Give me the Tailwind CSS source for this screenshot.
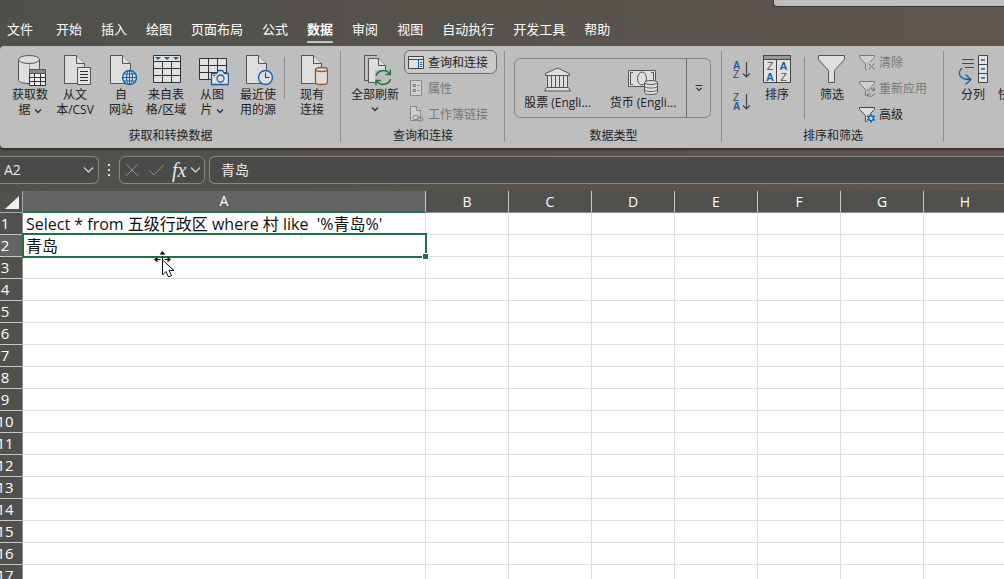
<!DOCTYPE html>
<html lang="zh-CN">
<head>
    <meta charset="UTF-8">
    <meta name="viewport" content="width=device-width, initial-scale=1.0">
    <title>工作簿 - 数据</title>
    <script src="https://cdn.jsdelivr.net/npm/@tailwindcss/browser@4"></script>
</head>
<body class="relative h-screen overflow-hidden flex flex-col bg-linear-to-r from-[#50504b] to-[#5e554e] font-['Open_Sans','Noto_Sans_CJK_SC',sans-serif] text-xs text-[#222]">

    <!-- Floating panel at the top edge -->
    <div class="absolute top-0 right-0 left-[773px] h-[7px] bg-[#bebebe] border-b border-l border-[#3a3733] rounded-bl-sm"></div>

    <!-- Ribbon tabs -->
    <nav class="shrink-0 h-[46px] pt-[19px] pl-[7px] flex items-start gap-[19px] text-[13px] leading-5 text-white whitespace-nowrap">
        <a href="#" class="mr-1">文件</a>
        <a href="#">开始</a>
        <a href="#">插入</a>
        <a href="#">绘图</a>
        <a href="#">页面布局</a>
        <a href="#">公式</a>
        <a href="#" class="font-bold h-6 border-b-2 border-[#b4c8bf]">数据</a>
        <a href="#">审阅</a>
        <a href="#">视图</a>
        <a href="#">自动执行</a>
        <a href="#">开发工具</a>
        <a href="#">帮助</a>
    </nav>

    <!-- Ribbon -->
    <div class="shrink-0 h-[102px] flex overflow-hidden rounded-l-sm bg-[#bebebe] shadow-[0_2px_2px_#35312e] leading-[15px] whitespace-nowrap">

        <section class="shrink-0 w-[341px] flex flex-col relative">
            <div class="flex pl-2 pt-2">
                <button class="w-11 flex flex-col items-center">
                    <svg width="32" height="32" fill="#dedede" stroke="#555">
                        <path d="M4.500 5v21c0 2 4.500 3.500 10.500 3.500h1V5z"/>
                        <path d="M25.500 5v10"/>
                        <path d="M16 5h9v10h-9z" stroke="none"/>
                        <ellipse cx="15" cy="5.500" rx="10.500" ry="4"/>
                        <path d="M15.500 15.500h16v16h-16z" fill="#eee" stroke="#333"/>
                        <path d="M15.500 15.500h16v4h-16z" fill="#888" stroke="#555"/>
                        <path d="M20.500 20v11M26.500 20v11M16 23.500h15M16 27.500h15" stroke="#333"/>
                    </svg>
                    <span class="mt-px">获取数<br>据 <svg class="inline" width="8" height="6" fill="none" stroke="#333" stroke-width="1.400"><path d="M1 1.500l3 3 3-3"/></svg></span>
                </button>
                <button class="w-[46px] flex flex-col items-center">
                    <svg width="32" height="32" fill="#dedede" stroke="#555">
                        <path d="M5.500 1.500h12l8 8v20h-20z"/><path d="M17.500 1.500v8h8"/>
                        <path d="M18.500 13.500h13v17h-13z" fill="#e4e4e4"/>
                        <path d="M21 17.500h8M21 20.500h8M21 23.500h8M21 26.500h8" stroke="#333"/>
                    </svg>
                    <span class="mt-px">从文<br>本/CSV</span>
                </button>
                <button class="w-[46px] flex flex-col items-center">
                    <svg width="32" height="32" fill="#dedede" stroke="#555">
                        <path d="M5.500 1.500h12l8 8v20h-20z"/><path d="M17.500 1.500v8h8"/>
                        <g stroke="#1260a8"><circle cx="24.500" cy="23.500" r="7" stroke-width="1.400"/><ellipse cx="24.500" cy="23.500" rx="3" ry="7"/><path d="M17.500 23.500h14M18.500 20h12M18.500 27h12M24.500 16.500v14" fill="none"/></g>
                    </svg>
                    <span class="mt-px">自<br>网站</span>
                </button>
                <button class="w-11 flex flex-col items-center">
                    <svg width="32" height="32" fill="#e2e2e2" stroke="#333">
                        <path d="M3.500 1.500h27v27h-27z"/>
                        <path d="M3.500 7.500h27M3.500 14.500h27M3.500 21.500h27M12.500 7v21M21.500 7v21"/>
                        <path d="M5 3h6l-3 3zM14 3h6l-3 3zM23 3h6l-3 3z" fill="#1260a8" stroke="none"/>
                    </svg>
                    <span class="mt-px">来自表<br>格/区域</span>
                </button>
                <button class="w-12 flex flex-col items-center">
                    <svg width="34" height="32" viewBox="-1 0 34 32" fill="#e2e2e2" stroke="#333">
                        <path d="M3.500 4.500h27v21h-27z"/><path d="M3.500 11.500h27M3.500 18.500h27M12.500 4v21M21.500 4v21"/>
                        <path d="M15.500 19.500h5l2-3h4l2 3h4v11h-17z" stroke="#1260a8" stroke-width="1.300"/>
                        <circle cx="24.500" cy="24.500" r="3.500" stroke="#1260a8" stroke-width="1.300"/><path d="M17 21.500h2" stroke="#1260a8"/>
                    </svg>
                    <span class="mt-px">从图<br>片 <svg class="inline" width="8" height="6" fill="none" stroke="#333" stroke-width="1.400"><path d="M1 1.500l3 3 3-3"/></svg></span>
                </button>
                <button class="w-11 flex flex-col items-center">
                    <svg width="32" height="32" fill="#dedede" stroke="#555">
                        <path d="M4.500 1.500h12l8 8v20h-20z"/><path d="M16.500 1.500v8h8"/>
                        <circle cx="23.500" cy="23.500" r="7" stroke="#1260a8" stroke-width="1.400"/><path d="M23.500 18.500v5h4" fill="none" stroke="#333"/>
                    </svg>
                    <span class="mt-px">最近使<br>用的源</span>
                </button>
                <div class="w-px h-[42px] mt-[3px] ml-1 mr-[5px] bg-[#8c8c8c]"></div>
                <button class="w-11 flex flex-col items-center">
                    <svg width="32" height="32" fill="#dedede" stroke="#555">
                        <path d="M5.500 1.500h12l8 8v20h-20z"/><path d="M17.500 1.500v8h8"/>
                        <g stroke="#a1561f" stroke-width="1.300"><path d="M19.500 15.500v13c0 1.300 2.500 2 6 2s6-.7 6-2v-13"/><ellipse cx="25.500" cy="15.500" rx="6" ry="2"/></g>
                    </svg>
                    <span class="mt-px">现有<br>连接</span>
                </button>
            </div>
            <h2 class="absolute bottom-[5px] inset-x-0 text-center">获取和转换数据</h2>
            <div class="absolute right-0 top-[5px] w-px h-[91px] bg-[#8c8c8c]"></div>
        </section>

        <section class="shrink-0 w-[164px] flex flex-col relative">
            <div class="flex pl-2">
                <button class="w-[52px] pt-2 flex flex-col items-center self-start">
                    <svg width="32" height="32" fill="#dedede" stroke="#555">
                        <path d="M18 1.500H5.500v25H9" fill="none"/>
                        <path d="M9.500 4.500h10l7 7v17h-17z"/><path d="M19.500 4.500v7h7"/>
                        <path d="M16 16h15v15H16z" fill="#bebebe" stroke="none"/>
                        <g fill="none" stroke="#23713f" stroke-width="1.500"><path d="M17 22a7.500 7 0 0 1 14-1.500M31.500 15.500v5h-5M31.500 25a7.500 7 0 0 1-14 1.500M17 31.500v-5h5"/></g>
                    </svg>
                    <span class="mt-px">全部刷新</span>
                    <svg class="mt-1" width="8" height="6" fill="none" stroke="#333" stroke-width="1.400"><path d="M1 1.500l3 3 3-3"/></svg>
                </button>
                <div class="ml-[3px] pt-1 flex flex-col gap-0.5 items-start">
                    <button class="h-6 w-[93px] pl-[3px] flex items-center gap-1 rounded-md border border-[#6c6c6c] bg-[#cacaca]">
                        <svg width="16" height="16" fill="#e2e2e2" stroke="#444"><path d="M.5 2.500h15v12H.5zM.5 5.500h15"/><path d="M10.500 6v8" stroke="#1260a8"/><path d="M12 8.500h2M12 10.500h2M12 12.500h2" stroke="#1260a8"/></svg>
                        查询和连接
                    </button>
                    <button class="h-6 pl-1 flex items-center gap-1 text-[#777]" disabled>
                        <svg width="16" height="16" fill="#d0d0d0" stroke="#888"><path d="M2.500.5h11v15h-11z"/><path d="M5 4.500h2.500v2H5zM5 9.500h2.500v2H5zM9.500 5.500h2M9.500 10.500h2" stroke="#777"/></svg>
                        属性
                    </button>
                    <button class="h-6 pl-1 flex items-center gap-1 text-[#777]" disabled>
                        <svg width="16" height="16" fill="#d0d0d0" stroke="#888"><path d="M2.500.5h6l4 4v10h-10z"/><path d="M8.500.5v4h4"/><rect x="5" y="9.500" width="6" height="4" rx="2"/><rect x="9" y="11" width="6" height="4" rx="2" fill="none"/></svg>
                        工作簿链接
                    </button>
                </div>
            </div>
            <h2 class="absolute bottom-[5px] inset-x-0 text-center">查询和连接</h2>
            <div class="absolute right-0 top-[5px] w-px h-[91px] bg-[#8c8c8c]"></div>
        </section>

        <section class="shrink-0 w-[217px] flex flex-col relative">
            <div class="mt-3 ml-[9px] w-[197px] h-[60px] flex rounded-md border border-[#858585]">
                <button class="w-[85px] pt-2 flex flex-col items-center">
                    <svg width="29" height="26" fill="#dedede" stroke="#555">
                        <path d="M2.500 6.500L14.500 1l12 5.500v2h-24z"/>
                        <path d="M4.500 8.500h20v12h-20z"/><path d="M8.500 8.500v12M12.500 8.500v12M16.500 8.500v12M20.500 8.500v12"/>
                        <path d="M3.500 20.500h22l2 3.500h-26z"/>
                    </svg>
                    <span class="mt-0.5">股票 (Engli...</span>
                </button>
                <button class="w-[86px] pt-2 flex flex-col items-center">
                    <svg width="30" height="28" fill="#dedede" stroke="#555">
                        <path d="M.5 3.500h27v16H.5z"/><ellipse cx="14" cy="11.500" rx="4.500" ry="6.500"/>
                        <path d="M5 5.500H2.500v12H5M23 5.500h2.500v8" fill="none"/>
                        <path d="M16.500 15.500v10c0 1.300 3 2 6.500 2s6.500-.7 6.500-2v-10"/><ellipse cx="23" cy="15.500" rx="6.500" ry="2"/>
                        <path d="M16.500 19c0 1.300 3 2 6.500 2s6.500-.7 6.500-2M16.500 22.500c0 1.300 3 2 6.500 2s6.500-.7 6.500-2" fill="none"/>
                    </svg>
                    <span>货币 (Engli...</span>
                </button>
                <button class="flex-1 flex items-center justify-center border-l border-[#6c6c6c]" aria-label="更多数据类型">
                    <svg width="8" height="8" fill="none" stroke="#333" stroke-width="1.200"><path d="M.5 1.500h7M1.500 4l2.500 2.500L6.500 4"/></svg>
                </button>
            </div>
            <h2 class="absolute bottom-[5px] inset-x-0 text-center">数据类型</h2>
            <div class="absolute right-0 top-[5px] w-px h-[91px] bg-[#8c8c8c]"></div>
        </section>

        <section class="shrink-0 w-[222px] flex flex-col relative">
            <div class="flex pl-2.5">
                <div class="pt-3.5 flex flex-col gap-3">
                    <button aria-label="升序">
                        <svg class="block" width="20" height="20" fill="none" stroke="#444">
                            <g stroke="none" font-size="10" font-family="Liberation Sans"><text x="1" y="9" fill="#1260a8" font-weight="bold">A</text><text x="1" y="18" fill="#444">Z</text></g>
                            <path d="M14.500 2v15M11 13.500l3.500 3.500 3.500-3.500" stroke-width="1.200"/>
                        </svg>
                    </button>
                    <button aria-label="降序">
                        <svg class="block" width="20" height="20" fill="none" stroke="#444">
                            <g stroke="none" font-size="10" font-family="Liberation Sans"><text x="1" y="9" fill="#444">Z</text><text x="1" y="18" fill="#1260a8" font-weight="bold">A</text></g>
                            <path d="M14.500 2v15M11 13.500l3.500 3.500 3.500-3.500" stroke-width="1.200"/>
                        </svg>
                    </button>
                </div>
                <button class="w-11 pt-2 ml-[3px] flex flex-col items-center self-start">
                    <svg width="32" height="32" fill="#e2e2e2" stroke="#444">
                        <path d="M2.500 1.500h27v27h-27z"/><path d="M2.500 1.500h27v4h-27z" fill="#999"/><path d="M15.500 6v22"/>
                        <g stroke="none" font-size="11" font-family="Liberation Sans" text-anchor="middle"><text x="9" y="16" fill="#555">Z</text><text x="9" y="27" fill="#1260a8" font-weight="bold">A</text><text x="22.500" y="16" fill="#1260a8" font-weight="bold">A</text><text x="22.500" y="27" fill="#555">Z</text></g>
                    </svg>
                    <span class="mt-px">排序</span>
                </button>
                <div class="w-px h-[62px] mt-[11px] ml-[5px] mr-[5px] bg-[#8c8c8c]"></div>
                <button class="w-11 pt-2 flex flex-col items-center self-start">
                    <svg width="32" height="32" fill="#dedede" stroke="#555"><path d="M2.500 1.500h26v4l-10 11v12h-6v-12l-10-11z"/></svg>
                    <span class="mt-px">筛选</span>
                </button>
                <div class="ml-[5px] pt-1 flex flex-col gap-0.5 items-start">
                    <button class="h-6 flex items-center gap-[3px] text-[#777]" disabled>
                        <svg width="17" height="17" fill="#d0d0d0" stroke="#777"><path d="M.5 1.500h15v2l-6 6v6h-3v-6l-6-6z"/><path d="M8 8h9v9H8z" fill="#bebebe" stroke="none"/><path d="M9.500 9.500l6 6M15.500 9.500l-6 6"/></svg>
                        清除
                    </button>
                    <button class="h-6 flex items-center gap-[3px] text-[#777]" disabled>
                        <svg width="17" height="17" fill="#d0d0d0" stroke="#777"><path d="M.5 1.500h15v2l-6 6v6h-3v-6l-6-6z"/><path d="M7.500 7.500H17V17H7.500z" fill="#bebebe" stroke="none"/><path d="M8.500 12a4 4 0 0 1 7-2M15.500 7.500v3h-3M15.500 13a4 4 0 0 1-7 2M8.500 17v-3h3" fill="none"/></svg>
                        重新应用
                    </button>
                    <button class="h-6 flex items-center gap-[3px]">
                        <svg width="17" height="17" fill="#dedede" stroke="#444"><path d="M.5 1.500h15v2l-6 6v6h-3v-6l-6-6z"/><path d="M8 8h9v9H8z" fill="#bebebe" stroke="none"/><g fill="none" stroke="#1260a8"><path d="M12 8v8.500M8.300 10l7.400 4.300M8.300 14.300l7.400-4.300" stroke-width="1.600"/><circle cx="12" cy="12.200" r="2.400" stroke-width="1.300" fill="#dedede"/></g></svg>
                        高级
                    </button>
                </div>
            </div>
            <h2 class="absolute bottom-[5px] inset-x-0 text-center">排序和筛选</h2>
            <div class="absolute right-0 top-[5px] w-px h-[91px] bg-[#8c8c8c]"></div>
        </section>

        <section class="shrink-0 w-[260px] flex flex-col relative">
            <div class="flex pl-1.5 pt-2">
                <button class="w-12 flex flex-col items-center">
                    <svg width="32" height="32" fill="#e2e2e2" stroke="#444">
                        <path d="M20.500 1.500h9v27h-9zM20.500 10.500h9M20.500 19.500h9"/><path d="M23 6h4M23 15h4M23 24h4" stroke="#1260a8" stroke-width="1.300"/>
                        <path d="M4 5.500h12M4 9.500h12M7 13.500h9"/><path d="M4 14c-5 5-3 11.500 8.500 11.500M7.500 20.500l5.500 5-5.500 5" fill="none" stroke="#1260a8" stroke-width="1.300"/>
                    </svg>
                    <span class="mt-px pr-0.5">分列</span>
                </button>
                <button class="w-12 flex flex-col items-center">
                    <svg width="32" height="32" fill="#e2e2e2" stroke="#444"><path d="M2.500 1.500h27v27h-27zM2.500 10.500h27M2.500 19.500h27"/></svg>
                    <span class="mt-px">快速填充</span>
                </button>
            </div>
            <h2 class="absolute bottom-[5px] inset-x-0 text-center">数据工具</h2>
        </section>
    </div>

    <!-- Formula bar -->
    <div class="shrink-0 h-[43px] pt-2 flex items-start text-sm text-[#e8e8e8]">
        <div class="w-[99px] h-7 flex items-center pr-1 rounded-r-md border border-l-0 border-[#8a8783] bg-[#4a4a49]">
            <input class="min-w-0 flex-1 pl-1 outline-none" aria-label="名称框" value="A2">
            <button aria-label="名称列表"><svg class="block" width="11" height="8" fill="none" stroke="#ccc" stroke-width="1.300"><path d="M1 1.500l4.500 4.500 4.500-4.500"/></svg></button>
        </div>
        <svg class="mx-2 mt-2" width="4" height="12" fill="#ddd"><path d="M1 0h2v2H1zM1 5h2v2H1zM1 10h2v2H1z"/></svg>
        <div class="w-[86px] h-7 px-1 flex items-center rounded-md border border-[#8a8783] bg-[#4a4a49]">
            <button aria-label="取消"><svg class="block" width="16" height="14" fill="none" stroke="#8d8d8d"><path d="M2 1l12 12M14 1L2 13"/></svg></button>
            <button class="ml-2" aria-label="输入"><svg class="block" width="16" height="14" fill="none" stroke="#8d8d8d"><path d="M1 7l5 5L15.500 2"/></svg></button>
            <button class="w-[18px] ml-2 font-['Liberation_Serif',serif] italic text-xl leading-5" aria-label="插入函数">fx</button>
            <svg class="ml-1 shrink-0" width="11" height="8" fill="none" stroke="#ccc" stroke-width="1.300"><path d="M1 1.500l4.500 4.500 4.500-4.500"/></svg>
        </div>
        <input class="ml-1 flex-1 min-w-0 h-7 pb-0.5 pl-[11px] rounded-l-md border border-r-0 border-[#8a8783] bg-[#4a4a49] outline-none" aria-label="编辑栏" value="青岛">
    </div>

    <!-- Sheet -->
    <div class="flex-1 min-h-0 relative overflow-hidden bg-white">
        <table class="w-max table-fixed border-separate border-spacing-0 text-base leading-[19px] text-[#111]">
            <thead>
                <tr id="columns" class="text-sm leading-5 text-white">
                    <th class="w-[23px] min-w-[23px] h-[22px] p-0 bg-[#50504c] border-r border-b border-[#a8a8a8]" aria-label="全选">
                        <svg class="ml-auto mr-0.5" width="16" height="16" fill="#f0f0f0"><path d="M15 2v13H1z"/></svg>
                    </th>
                    <th class="w-[403px] min-w-[403px] h-[22px] p-0 font-normal bg-[#646464] border-r border-r-[#c8c8c8] border-b-2 border-b-[#207245]">A</th>
                </tr>
            </thead>
            <tbody id="rows"></tbody>
        </table>

        <!-- Active cell frame and fill handle -->
        <div class="absolute left-[22px] top-[42px] w-[405px] h-[25px] border-2 border-[#207245]"></div>
        <div class="absolute left-[422px] top-[62px] size-[7px] bg-[#207245] border border-white"></div>

        <!-- Mouse pointer with move arrows -->
        <svg class="absolute left-[154px] top-[60px]" width="24" height="30" fill="#111">
            <path d="M8.500 1v3M8.500 5v4M1.500 8.500h5M10.500 8.500h5" stroke="#111"/>
            <path d="M8.500 0l3 3.500h-6zM0 8.500l3.500-3v6zM17 8.500l-3.500-3v6z"/>
            <path d="M8.500 9v15l3.500-3.500 2.500 5.500 3-1.500-2.500-5h5z" fill="#fff" stroke="#111"/>
        </svg>
    </div>

    <script>
        const columns = document.getElementById('columns');
        const rows = document.getElementById('rows');
        const letters = 'BCDEFGHIJKLMNOPQRSTUVWXYZ'.split('');
        const cells = {
            1: "Select * from 五级行政区 where 村 like  '%青岛%'",
            2: '青岛'
        };

        letters.forEach((letter) => {
            const th = document.createElement('th');
            th.className = 'w-[83px] min-w-[83px] h-[22px] p-0 font-normal bg-[#50504c] border-r border-r-[#c8c8c8] border-b border-b-[#8f8f8f]';
            th.textContent = letter;
            columns.appendChild(th);
        });

        for (let r = 1; r <= 60; r++) {
            const tr = document.createElement('tr');
            const head = document.createElement('th');
            head.className = 'h-[22px] p-0 font-normal text-white border-r border-r-[#8f8f8f] border-b border-b-[#c8c8c8] ' + (r === 2 ? 'bg-[#646464]' : 'bg-[#50504c]');
            head.innerHTML = `<div class="h-[21px] w-[22px] pr-3 flex justify-center items-center overflow-hidden text-[15px]">${r}</div>`;
            tr.appendChild(head);

            const first = document.createElement('td');
            first.className = 'h-[22px] pt-0.5 pb-0 pl-[3px] pr-0 whitespace-pre border-r border-b border-[#dedede]';
            first.textContent = cells[r] || '';
            tr.appendChild(first);

            letters.forEach(() => {
                const td = document.createElement('td');
                td.className = 'h-[22px] p-0 border-r border-b border-[#dedede]';
                tr.appendChild(td);
            });
            rows.appendChild(tr);
        }
    </script>
</body>
</html>
